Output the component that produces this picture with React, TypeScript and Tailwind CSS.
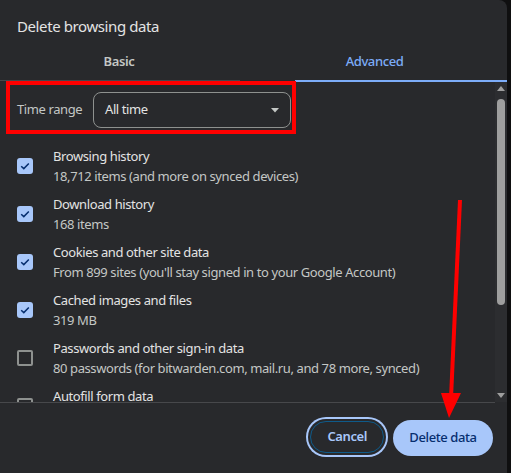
import React from 'react';

const items = [
  { title: 'Browsing history', sub: '18,712 items (and more on synced devices)', checked: true },
  { title: 'Download history', sub: '168 items', checked: true },
  { title: 'Cookies and other site data', sub: "From 899 sites (you'll stay signed in to your Google Account)", checked: true },
  { title: 'Cached images and files', sub: '319 MB', checked: true },
  { title: 'Passwords and other sign-in data', sub: '80 passwords (for bitwarden.com, mail.ru, and 78 more, synced)', checked: false },
  { title: 'Autofill form data', sub: '', checked: false },
];

const Checkbox = ({ checked }: { checked: boolean }) =>
  checked ? (
    <div className="w-4 h-4 rounded-[3px] bg-[#a8c7fa] flex items-center justify-center shrink-0">
      <svg width="10" height="8" viewBox="0 0 10 8" fill="none">
        <path d="M1.2 4.2 L3.8 6.6 L8.8 1.4" stroke="#062e6f" strokeWidth="1.5" />
      </svg>
    </div>
  ) : (
    <div className="w-4 h-4 rounded-[2px] border-2 border-[#8e918f] shrink-0" />
  );

export default function App() {
  return (
    <div
      className="relative w-[511px] h-[473px] bg-[#0f0f10] overflow-hidden text-[13px] tracking-[-0.4px]"
      style={{ fontFamily: '"Noto Sans", "Open Sans", sans-serif' }}
    >
      <div className="w-[507px] h-[473px] bg-[#28292c] rounded-tr-[8px] flex flex-col">
        {/* Title */}
        <div className="h-[44px] pl-[17px] pt-[15px] text-[15px] leading-[22px] text-[#e3e3e3]">
          Delete browsing data
        </div>

        {/* Tabs */}
        <div className="flex h-[36px] items-center">
          <div className="w-[238px] text-center font-semibold text-[#c4c7c5]">Basic</div>
          <div className="flex-1 text-center font-medium text-[#7cacf8] pl-[4px]">Advanced</div>
        </div>
        <div className="flex h-[2px]">
          <div className="w-[240px] h-px bg-[#47484b]" />
          <div className="w-[55px] h-px" />
          <div className="flex-1 h-[2px] bg-[#7cacf8]" />
        </div>

        {/* Scroll area */}
        <div className="flex h-[320px]">
          <div className="flex-1 overflow-hidden">
            <div className="flex items-center pt-[10px] pl-[17px]">
              <span className="text-[#c4c7c5] w-[76px]">Time range</span>
              <div className="w-[198px] h-[36px] rounded-[8px] border border-[#8e918f] flex items-center justify-between pl-[11px] pr-[11px] text-[#e3e3e3]">
                <span>All time</span>
                <svg width="8" height="5" viewBox="0 0 8 5">
                  <path d="M0 0 L8 0 L4 4.5 Z" fill="#c4c7c5" />
                </svg>
              </div>
            </div>
            <div className="pt-[14px]">
              {items.map((it) => (
                <div key={it.title} className="h-[48px] flex items-center pl-[17px]">
                  <Checkbox checked={it.checked} />
                  <div className="ml-[20px] leading-[20px] whitespace-nowrap">
                    <div className="text-[#e3e3e3]">{it.title}</div>
                    <div className="h-[20px] text-[#c4c7c5]">{it.sub}</div>
                  </div>
                </div>
              ))}
            </div>
          </div>
          {/* Scrollbar */}
          <div className="w-[12px] bg-[#2c2d30] flex flex-col items-center pt-[4px] pb-[4px]">
            <svg width="8" height="5" viewBox="0 0 8 5">
              <path d="M0 5 L8 5 L4 0 Z" fill="#9e9e9e" />
            </svg>
            <div className="w-[8px] h-[206px] mt-[8px] rounded-full bg-[#9e9e9e]" />
            <div className="flex-1" />
            <svg width="8" height="5" viewBox="0 0 8 5">
              <path d="M0 0 L8 0 L4 5 Z" fill="#9e9e9e" />
            </svg>
          </div>
        </div>
        <div className="h-px bg-[#47484b] mr-[12px]" />

        {/* Footer */}
        <div className="flex justify-end items-start pt-[17px] pr-[14px] gap-[5px]">
          <div className="rounded-full p-[2px] bg-[#a8c7fa] -mt-[3px]">
            <div className="rounded-full p-[2px] bg-[#28292c]">
              <div className="h-[32px] px-[16px] rounded-full border border-[#0e5a8a] flex items-center font-semibold text-[#a8c7fa]">
                Cancel
              </div>
            </div>
          </div>
          <div className="h-[36px] w-[100px] rounded-full bg-[#a8c7fa] flex items-center justify-center font-medium text-[#062e6f]">
            Delete data
          </div>
        </div>
      </div>

      {/* Annotation overlays */}
      <div className="absolute left-[6px] top-[81px] w-[290px] h-[53px] border-4 border-[#ff0000] pointer-events-none" />
      <svg className="absolute left-0 top-0 pointer-events-none" width="511" height="473">
        <line x1="460" y1="200" x2="451" y2="398" stroke="#ff0000" strokeWidth="4" />
        <path d="M441 393 L461 393 L449 418 Z" fill="#ff0000" />
      </svg>
    </div>
  );
}
